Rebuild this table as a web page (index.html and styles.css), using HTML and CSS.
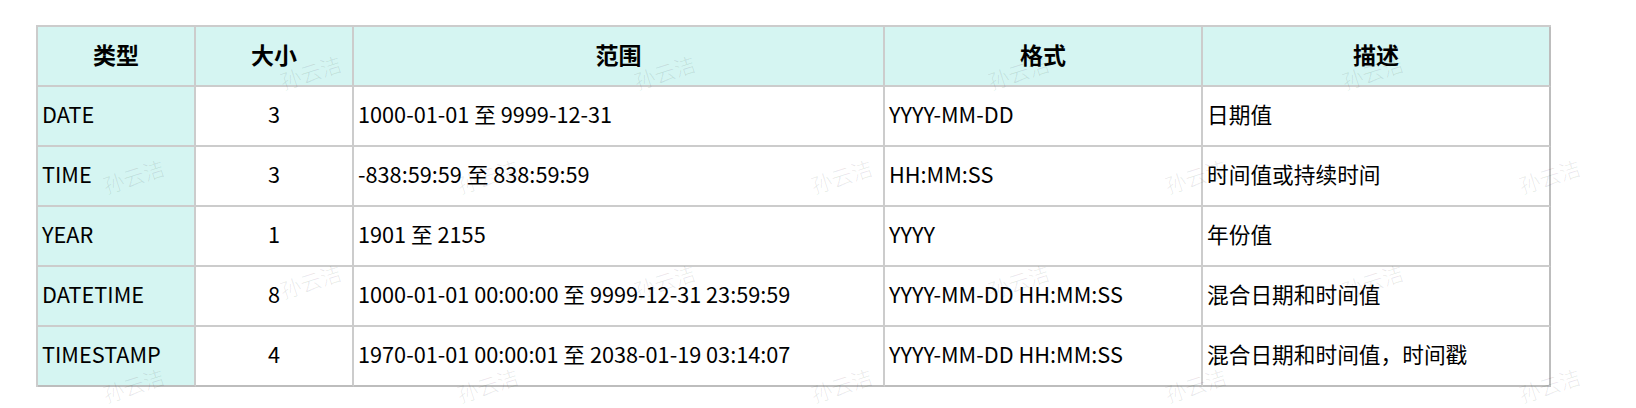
FILE: index.html
```html
<!DOCTYPE html>
<html lang="zh-CN">
<head>
<meta charset="utf-8">
<title>日期时间类型</title>
<link rel="stylesheet" href="styles.css">
</head>
<body>
<div class="sheet">
  <div class="grid">
    <div class="cell head">类型</div>
    <div class="cell head">大小</div>
    <div class="cell head">范围</div>
    <div class="cell head">格式</div>
    <div class="cell head last">描述</div>

    <div class="cell key">DATE</div>
    <div class="cell num">3</div>
    <div class="cell">1000-01-01 至 9999-12-31</div>
    <div class="cell">YYYY-MM-DD</div>
    <div class="cell last">日期值</div>

    <div class="cell key">TIME</div>
    <div class="cell num">3</div>
    <div class="cell">-838:59:59 至 838:59:59</div>
    <div class="cell">HH:MM:SS</div>
    <div class="cell last">时间值或持续时间</div>

    <div class="cell key">YEAR</div>
    <div class="cell num">1</div>
    <div class="cell">1901 至 2155</div>
    <div class="cell">YYYY</div>
    <div class="cell last">年份值</div>

    <div class="cell key">DATETIME</div>
    <div class="cell num">8</div>
    <div class="cell">1000-01-01 00:00:00 至 9999-12-31 23:59:59</div>
    <div class="cell">YYYY-MM-DD HH:MM:SS</div>
    <div class="cell last">混合日期和时间值</div>

    <div class="cell key bottom">TIMESTAMP</div>
    <div class="cell num bottom">4</div>
    <div class="cell bottom">1970-01-01 00:00:01 至 2038-01-19 03:14:07</div>
    <div class="cell bottom">YYYY-MM-DD HH:MM:SS</div>
    <div class="cell last bottom">混合日期和时间值，时间戳</div>
  </div>
</div>

<div class="watermarks" aria-hidden="true">
  <div class="wm"></div><div class="wm">孙云洁</div><div class="wm"></div><div class="wm">孙云洁</div><div class="wm"></div><div class="wm">孙云洁</div><div class="wm"></div><div class="wm">孙云洁</div><div class="wm"></div>
  <div class="wm">孙云洁</div><div class="wm"></div><div class="wm">孙云洁</div><div class="wm"></div><div class="wm">孙云洁</div><div class="wm"></div><div class="wm">孙云洁</div><div class="wm"></div><div class="wm">孙云洁</div>
  <div class="wm"></div><div class="wm">孙云洁</div><div class="wm"></div><div class="wm">孙云洁</div><div class="wm"></div><div class="wm">孙云洁</div><div class="wm"></div><div class="wm">孙云洁</div><div class="wm"></div>
  <div class="wm">孙云洁</div><div class="wm"></div><div class="wm">孙云洁</div><div class="wm"></div><div class="wm">孙云洁</div><div class="wm"></div><div class="wm">孙云洁</div><div class="wm"></div><div class="wm">孙云洁</div>
</div>
</body>
</html>
```

FILE: styles.css
```css
html, body {
  margin: 0;
  padding: 0;
  background: #ffffff;
  overflow: hidden;
}

body {
  font-family: "Noto Sans CJK SC", sans-serif;
  color: #000;
}

.sheet {
  padding: 25px 0 0 36px;
}

.grid {
  display: grid;
  grid-template-columns: 158px 158px 531px 318px 348px;
  grid-auto-rows: 60px;
  width: 1513px;
  border-left: 2px solid #cccccc;
  border-top: 2px solid #cccccc;
}

.cell {
  box-sizing: border-box;
  display: flex;
  align-items: center;
  padding: 0 0 4px 4px;
  border-right: 2px solid #cccccc;
  border-bottom: 2px solid #cccccc;
  font-size: 21.7px;
  line-height: 1.2;
  background: #ffffff;
  white-space: nowrap;
}

.cell.last {
  border-right-color: #bdbdbd;
}

.cell.bottom {
  border-bottom-color: #bdbdbd;
}

.cell.head {
  justify-content: center;
  padding: 0 0 2px 0;
  background: #d5f5f2;
  font-weight: 700;
  font-size: 23px;
}

.cell.key {
  background: #d5f5f2;
}

.cell.num {
  justify-content: center;
  padding-left: 0;
}

.watermarks {
  position: absolute;
  inset: 0;
  overflow: hidden;
  pointer-events: none;
  box-sizing: border-box;
  padding: 20px 0 0 45px;
  display: grid;
  grid-template-columns: repeat(9, 177px);
  grid-auto-rows: 104.3px;
}

.wm {
  display: flex;
  align-items: center;
  justify-content: center;
  font-weight: 300;
  font-size: 21px;
  color: rgba(0, 0, 0, 0.09);
  transform: rotate(-18deg);
}
```
